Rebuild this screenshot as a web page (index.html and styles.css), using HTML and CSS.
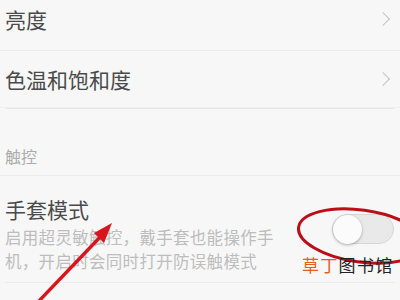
FILE: index.html
```html
<!DOCTYPE html>
<html lang="zh-CN">
<head>
    <meta charset="UTF-8">
    <meta name="viewport" content="width=device-width, initial-scale=1.0">
    <title>显示设置</title>
    <link rel="stylesheet" href="styles.css">
</head>
<body>
    <div class="list">
        <div class="row">
            <span class="title">亮度</span>
            <span class="chevron"></span>
        </div>
        <div class="row row-double">
            <span class="title">色温和饱和度</span>
            <span class="chevron"></span>
        </div>
        <div class="section">触控</div>
        <div class="row row-glove">
            <div class="text">
                <div class="title">手套模式</div>
                <div class="desc">启用超灵敏触控，戴手套也能操作手<br>机，开启时会同时打开防误触模式</div>
            </div>
            <div class="switch"><span class="knob"></span></div>
        </div>
    </div>

    <!-- annotations drawn over the screenshot -->
    <svg class="marks" width="400" height="300" viewBox="0 0 400 300">
        <ellipse cx="361" cy="236" rx="63" ry="26" transform="rotate(8 361 236)" fill="none" stroke="#bb0f18" stroke-width="3"/>
        <line x1="38" y1="302" x2="104" y2="233" stroke="#d8141c" stroke-width="3.4"/>
        <polygon points="112,223 94,233 104,243" fill="#d8141c"/>
    </svg>
    <div class="watermark"><span class="wm-orange">草丁</span>图书馆</div>
</body>
</html>
```

FILE: styles.css
```css
body {
    margin: 0;
    width: 400px;
    height: 300px;
    overflow: hidden;
    background: #f7f7f7;
    font-family: "Noto Sans CJK SC", "Noto Sans", sans-serif;
    position: relative;
}
.list {
    margin-top: -12px;
}
.row {
    display: flex;
    align-items: center;
    justify-content: space-between;
    height: 62px;
    padding: 0 8px 0 5px;
    border-bottom: 1px solid #ebebeb;
}
.row-double {
    height: 56px;
    border-bottom: 1px solid #efefef;
    box-shadow: 0 7px 0 -6px #e6e6e6;
}
.title {
    font-size: 21px;
    color: #4a4a4a;
    line-height: 1;
}
.chevron {
    width: 9px;
    height: 9px;
    border-top: 1.5px solid #c4c4c4;
    border-right: 1.5px solid #c4c4c4;
    transform: rotate(45deg);
    margin-right: 4px;
}
.section {
    height: 68px;
    box-sizing: border-box;
    padding: 36px 0 0 5px;
    font-size: 16px;
    color: #acacac;
    border-bottom: 1px solid #ebebeb;
}
.row-glove {
    height: 107px;
    box-sizing: border-box;
    align-items: flex-start;
    padding: 23px 1px 0 0;
    margin: 0 5px;
}
.row-glove .title {
    margin-bottom: 5px;
}
.desc {
    font-size: 16.5px;
    line-height: 24px;
    color: #bdbdbd;
    letter-spacing: 0.3px;
}
.switch {
    width: 60px;
    height: 28px;
    border-radius: 15px;
    background: #e9e9e9;
    border: 1px solid #d6d6d6;
    display: flex;
    align-items: center;
    margin-top: 15px;
}
.knob {
    width: 29px;
    height: 29px;
    border-radius: 50%;
    background: #fbfbfb;
    box-shadow: 0 1px 3px rgba(0, 0, 0, 0.3);
}
.marks {
    position: absolute;
    left: 0;
    top: 0;
}
.watermark {
    position: absolute;
    left: 302px;
    top: 253px;
    font-size: 17px;
    letter-spacing: 1.3px;
    color: #222;
    line-height: 24px;
}
.wm-orange {
    color: #e2601c;
}
```
